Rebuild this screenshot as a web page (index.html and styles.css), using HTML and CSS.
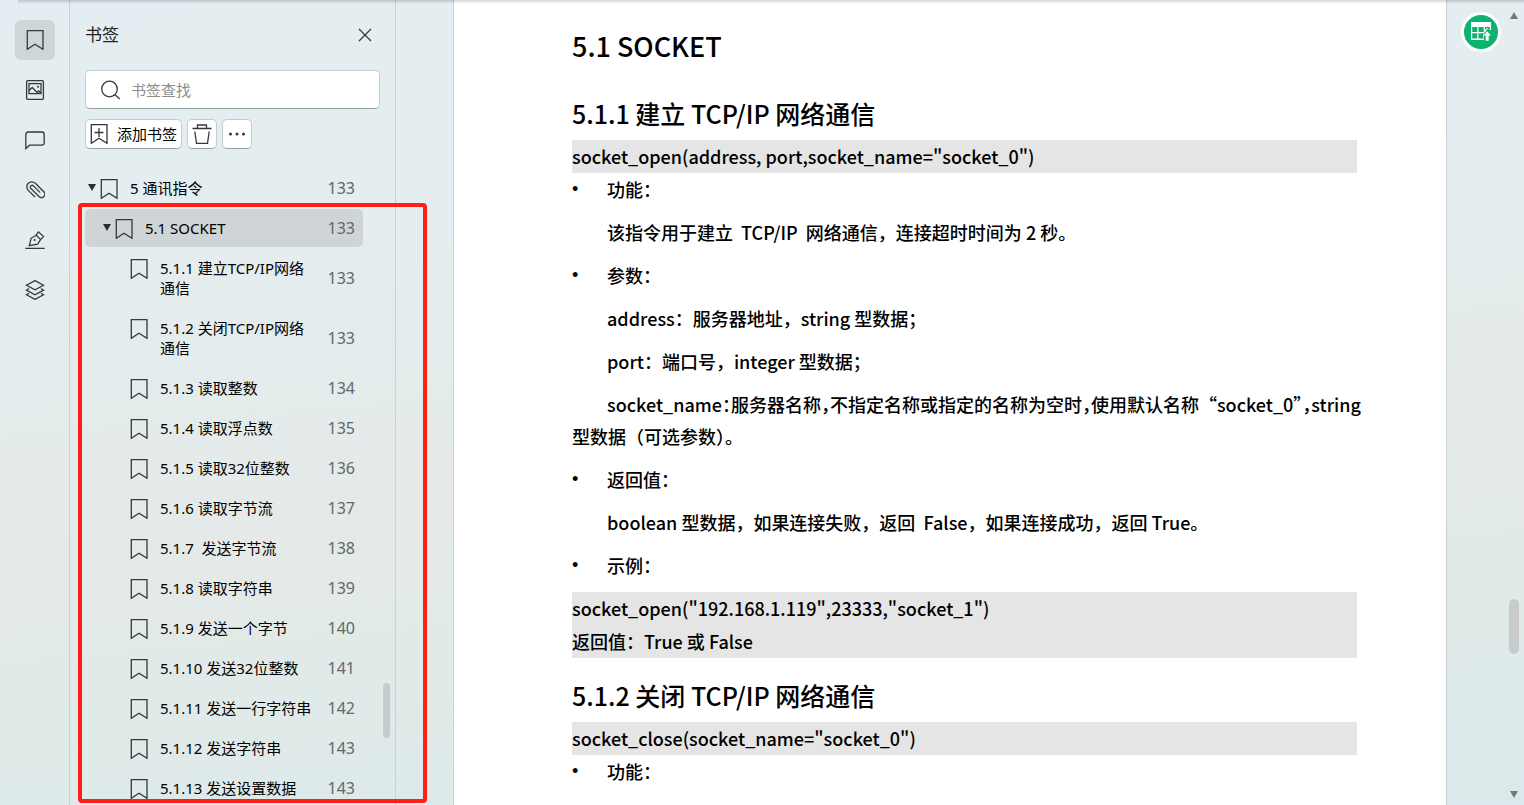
FILE: index.html
```html
<!DOCTYPE html>
<html lang="zh-CN">
<head>
  <meta charset="UTF-8" />
  <meta name="viewport" content="width=device-width, initial-scale=1.0"/>
  <title>书签</title>
  <link rel="stylesheet" href="styles.css">
</head>
<body>

  <!-- SHARED ICONS -->
  <svg class="sprite" aria-hidden="true">
    <symbol id="bookmark" viewBox="0 0 18 20">
      <path d="M1.3.7H17v18.6l-8-5-7.700 5z"/>
    </symbol>
  </svg>

  <div class="app">

    <!-- ICON RAIL -->
    <nav class="rail">
      <button class="rail-btn active" aria-label="书签"><svg class="icon mark" aria-hidden="true"><use href="#bookmark"/></svg></button>
      <button class="rail-btn" aria-label="缩略图">
        <svg class="icon" viewBox="0 0 20 20" aria-hidden="true"><rect x="1.6" y=".7" width="16.8" height="18.6" rx="1"/><rect x="4" y="3.6" width="12" height="10"/><path d="M4 10.5l3.2-3 5 5 1.5-1.5 2.3 2.2"/><circle class="dot" cx="13" cy="6.7" r="1"/></svg>
      </button>
      <button class="rail-btn" aria-label="批注">
        <svg class="icon" viewBox="0 0 20 20" aria-hidden="true"><path d="M.8 18.5V4.4q0-2.4 2.4-2.4h13.6q2.4 0 2.4 2.4v8.4q0 2.4-2.4 2.4H4.6z"/></svg>
      </button>
      <button class="rail-btn" aria-label="附件">
        <svg class="icon" viewBox="0 0 20 20" aria-hidden="true"><path transform="rotate(135 10 10)" d="M15 5v9.500a5 5 0 0 1-10 0V2.500a3.400 3.400 0 0 1 6.800 0v11.500a1.800 1.800 0 0 1-3.600 0V4.500"/></svg>
      </button>
      <button class="rail-btn" aria-label="签名">
        <svg class="icon" viewBox="0 0 20 20" aria-hidden="true"><path d="M.3 18.3h19.4M4.300 15.600l1.800-7.300 5.200-3 4.300 4.300-3 4.500zM11 5.200l2.500-3.300 5 4.700-2.900 3"/><circle class="dot" cx="9.6" cy="10" r="1"/></svg>
      </button>
      <button class="rail-btn" aria-label="图层">
        <svg class="icon" viewBox="0 0 20 20" aria-hidden="true"><path d="M10 .6l8.500 4.600L10 9.800 1.500 5.200zM4 8.500l-2.500 1.600 8.500 4.600 8.500-4.600L16 8.500M4 13.300l-2.500 1.500L10 19.400l8.500-4.600-2.500-1.500"/></svg>
      </button>
    </nav>

    <!-- BOOKMARK PANEL -->
    <aside class="panel">
      <div class="panel-head">
        <h1>书签</h1>
        <button class="close" aria-label="关闭"><svg class="icon small" viewBox="0 0 14 14" aria-hidden="true"><path d="M1 1l12 12M13 1L1 13"/></svg></button>
      </div>

      <label class="search">
        <svg class="icon" viewBox="0 0 20 20" aria-hidden="true"><circle cx="8.5" cy="9" r="7.8"/><path d="M14 14.800l4.700 4.200"/></svg>
        <input type="text" placeholder="书签查找" aria-label="书签查找">
      </label>

      <div class="tools">
        <button class="tool"><svg class="icon mark" viewBox="0 0 18 20" aria-hidden="true"><path d="M1.3.7H17v18.6l-8-5-7.700 5zM9 4v9M4.500 8.500h9"/></svg>添加书签</button>
        <button class="tool" aria-label="删除"><svg class="icon" viewBox="0 0 20 20" aria-hidden="true"><path d="M.5 4.500h19M5.500 4V1h9v3M2.800 7.500l1.700 11.800h11l1.700-11.800"/></svg></button>
        <button class="tool" aria-label="更多"><svg class="icon" viewBox="0 0 20 20" aria-hidden="true"><circle class="dot" cx="3.5" cy="10" r="1.5"/><circle class="dot" cx="10" cy="10" r="1.5"/><circle class="dot" cx="16.5" cy="10" r="1.5"/></svg></button>
      </div>

      <ul class="tree">
        <li><a href="#s5" class="row"><span class="arrow"></span><svg class="icon mark" aria-hidden="true"><use href="#bookmark"/></svg><span class="name">5 通讯指令</span><span class="num">133</span></a>
          <ul>
            <li><a href="#s51" class="row level-1 selected"><span class="arrow"></span><svg class="icon mark" aria-hidden="true"><use href="#bookmark"/></svg><span class="name">5.1 SOCKET</span><span class="num">133</span></a>
              <ul>
                <li><a href="#s511" class="row level-2"><svg class="icon mark" aria-hidden="true"><use href="#bookmark"/></svg><span class="name">5.1.1 建立TCP/IP网络通信</span><span class="num">133</span></a></li>
                <li><a href="#s512" class="row level-2"><svg class="icon mark" aria-hidden="true"><use href="#bookmark"/></svg><span class="name">5.1.2 关闭TCP/IP网络通信</span><span class="num">133</span></a></li>
                <li><a href="#" class="row level-2"><svg class="icon mark" aria-hidden="true"><use href="#bookmark"/></svg><span class="name">5.1.3 读取整数</span><span class="num">134</span></a></li>
                <li><a href="#" class="row level-2"><svg class="icon mark" aria-hidden="true"><use href="#bookmark"/></svg><span class="name">5.1.4 读取浮点数</span><span class="num">135</span></a></li>
                <li><a href="#" class="row level-2"><svg class="icon mark" aria-hidden="true"><use href="#bookmark"/></svg><span class="name">5.1.5 读取32位整数</span><span class="num">136</span></a></li>
                <li><a href="#" class="row level-2"><svg class="icon mark" aria-hidden="true"><use href="#bookmark"/></svg><span class="name">5.1.6 读取字节流</span><span class="num">137</span></a></li>
                <li><a href="#" class="row level-2"><svg class="icon mark" aria-hidden="true"><use href="#bookmark"/></svg><span class="name">5.1.7&nbsp; 发送字节流</span><span class="num">138</span></a></li>
                <li><a href="#" class="row level-2"><svg class="icon mark" aria-hidden="true"><use href="#bookmark"/></svg><span class="name">5.1.8 读取字符串</span><span class="num">139</span></a></li>
                <li><a href="#" class="row level-2"><svg class="icon mark" aria-hidden="true"><use href="#bookmark"/></svg><span class="name">5.1.9 发送一个字节</span><span class="num">140</span></a></li>
                <li><a href="#" class="row level-2"><svg class="icon mark" aria-hidden="true"><use href="#bookmark"/></svg><span class="name">5.1.10 发送32位整数</span><span class="num">141</span></a></li>
                <li><a href="#" class="row level-2"><svg class="icon mark" aria-hidden="true"><use href="#bookmark"/></svg><span class="name">5.1.11 发送一行字符串</span><span class="num">142</span></a></li>
                <li><a href="#" class="row level-2"><svg class="icon mark" aria-hidden="true"><use href="#bookmark"/></svg><span class="name">5.1.12 发送字符串</span><span class="num">143</span></a></li>
                <li><a href="#" class="row level-2"><svg class="icon mark" aria-hidden="true"><use href="#bookmark"/></svg><span class="name">5.1.13 发送设置数据</span><span class="num">143</span></a></li>
              </ul>
            </li>
          </ul>
        </li>
      </ul>
      <div class="panel-thumb"></div>
      <div class="highlight-box"></div>
    </aside>

    <!-- DOCUMENT -->
    <main class="viewer">
      <article class="page">
        <h2 id="s51">5.1 SOCKET</h2>
        <h3 id="s511">5.1.1 建立 TCP/IP 网络通信</h3>
        <pre>socket_open(address, port,socket_name="socket_0")</pre>
        <p class="item">功能：</p>
        <p class="indent">该指令用于建立&nbsp; TCP/IP&nbsp; 网络通信，连接超时时间为 2 秒。</p>
        <p class="item">参数：</p>
        <p class="indent">address：服务器地址，string 型数据；</p>
        <p class="indent">port：端口号，integer 型数据；</p>
        <p class="indent wide">socket_name<span class="half">：</span>服务器名称<span class="half">，</span>不指定名称或指定的名称为空时<span class="half">，</span>使用默认名称“socket_0”<span class="half">，</span>string<br>型数据（可选参数）。</p>
        <p class="item">返回值：</p>
        <p class="indent">boolean 型数据，如果连接失败，返回&nbsp; False，如果连接成功，返回 True。</p>
        <p class="item">示例：</p>
        <pre>socket_open("192.168.1.119",23333,"socket_1")
返回值：True 或 False</pre>
        <h3 id="s512">5.1.2 关闭 TCP/IP 网络通信</h3>
        <pre>socket_close(socket_name="socket_0")</pre>
        <p class="item">功能：</p>
      </article>

      <div class="scrollbar">
        <span class="arrow up"></span>
        <span class="thumb"></span>
        <span class="arrow"></span>
      </div>

      <button class="export" aria-label="导出表格">
        <svg viewBox="0 0 20 20" aria-hidden="true"><path class="sheet" fill-rule="evenodd" d="M0 0h20v8.500l-3-2-5 6v4.500h1V18H0zM1.200 5v5h5.100V5zM7.500 5v5h5.200V5zM1.200 11.200v5.300h5.100v-5.300zM7.500 11.200v5.300h5.200v-5.300zM14 5v3l2-2 2.800 2V5z"/><path class="sheet" d="M16.200 9.200l3.800 4.500h-2.300v5h-3v-5h-2.300z"/></svg>
      </button>
    </main>
  </div>

</body>
</html>
```
FILE: styles.css
```css
:root {
  --line: #c8d0d3;
  --ink: #35393b;
  --ui-font: "Noto Sans", "Noto Sans CJK SC", sans-serif;
  --doc-font: "Noto Sans CJK SC", sans-serif;
}

* {
  box-sizing: border-box;
}

body {
  margin: 0;
  font-family: var(--ui-font);
  font-size: 15px;
  line-height: 20px;
  color: #000;
  background: linear-gradient(175deg, #e4edf1 0%, #e4edf0 25%, #e5eae8 60%, #e0eae8 78%, #dce9ec 100%);
}

h1, h2, h3, p, pre, ul {
  margin: 0;
  padding: 0;
}

ul {
  list-style: none;
}

button {
  font: inherit;
  color: inherit;
  padding: 0;
  border: none;
  background: none;
  cursor: pointer;
}

.sprite {
  position: absolute;
  width: 0;
  height: 0;
}

.app {
  display: flex;
  height: 100vh;
  overflow: hidden;
  position: relative;
}

/* soft shadow under the window toolbar */
.app::after {
  content: "";
  position: absolute;
  top: 0;
  left: 18px;
  right: 0;
  height: 4px;
  background: linear-gradient(rgba(0, 0, 0, 0.16), rgba(0, 0, 0, 0));
}

/* ICONS */
.icon {
  width: 20px;
  height: 20px;
  flex: none;
  fill: none;
  stroke: var(--ink);
  stroke-width: 1.3;
}

.icon.mark {
  width: 18px;
}

.icon.small {
  width: 14px;
  height: 14px;
}

.icon .dot {
  fill: var(--ink);
  stroke: none;
}

.arrow {
  flex: none;
  width: 8px;
  height: 7px;
  background: #2c2f31;
  clip-path: polygon(0 0, 100% 0, 50% 100%);
}

.arrow.up {
  clip-path: polygon(50% 0, 100% 100%, 0 100%);
}

/* ICON RAIL */
.rail {
  flex: none;
  width: 70px;
  padding: 20px 14px 0 15px;
  display: flex;
  flex-direction: column;
  gap: 10px;
  border-right: 1px solid var(--line);
}

.rail-btn {
  width: 40px;
  height: 40px;
  border-radius: 6px;
  display: flex;
  align-items: center;
  justify-content: center;
}

.rail-btn.active {
  background: #cfd6d9;
}

/* BOOKMARK PANEL */
.panel {
  flex: none;
  width: 326px;
  padding: 20px 15px 0;
  position: relative;
  border-right: 1px solid #cdd3d5;
}

.panel-head {
  display: flex;
  align-items: center;
  justify-content: space-between;
  height: 30px;
  padding-right: 8px;
  margin-bottom: 20px;
}

.panel-head h1 {
  font-size: 17px;
  font-weight: 400;
  color: #222;
}

.close {
  display: flex;
}

.search {
  display: flex;
  align-items: center;
  gap: 10px;
  height: 39px;
  padding: 0 15px;
  background: #fff;
  border: 1px solid #c3cdd0;
  border-bottom-color: #94a0a4;
  border-radius: 5px;
}

.search input {
  flex: 1;
  min-width: 0;
  padding: 0;
  border: none;
  outline: none;
  background: none;
  font: inherit;
}

.search input::placeholder {
  color: #8c8c8c;
}

.tools {
  display: flex;
  gap: 5px;
  margin-top: 10px;
}

.tool {
  display: flex;
  align-items: center;
  gap: 9px;
  height: 30px;
  padding: 0 4px;
  background: #fff;
  border: 1px solid #c3cdd0;
  border-bottom-color: #94a0a4;
  border-radius: 5px;
}

.tree {
  margin-top: 20px;
}

.row {
  display: flex;
  align-items: flex-start;
  margin: 0 17px 2px 0;
  padding: 9px 8px 9px 3px;
  border-radius: 5px;
  color: inherit;
  text-decoration: none;
}

.row.level-1 {
  padding-left: 18px;
}

.row.level-2 {
  padding-left: 45px;
}

.row.selected {
  background: #cfd4d6;
}

.row .arrow {
  margin: 6px 4px 0 0;
}

.row .icon {
  margin: 1px 12px -1px 0;
}

.name {
  flex: 1;
  padding-right: 12px;
}

.num {
  align-self: center;
  font-size: 16px;
  color: #62676a;
}

.panel-thumb {
  position: absolute;
  right: 5px;
  top: 683px;
  width: 7px;
  height: 55px;
  border-radius: 4px;
  background: #c6cccd;
}

/* red frame drawn over the listed section */
.highlight-box {
  position: absolute;
  top: 203px;
  bottom: 2px;
  left: 8px;
  right: -32px;
  border: 4px solid #ff2013;
  border-radius: 4px;
  z-index: 2;
}

/* DOCUMENT */
.viewer {
  flex: 1;
  min-width: 0;
  display: flex;
  justify-content: space-between;
  position: relative;
  padding-left: 57px;
}

.page {
  flex: 1;
  min-width: 0;
  padding: 28px 89px 0 118px;
  background: #fff;
  border-left: 1px solid var(--line);
  border-right: 1px solid var(--line);
  font-family: var(--doc-font);
  font-size: 18px;
  font-weight: 500;
  line-height: 32px;
}

.page h2,
.page h3 {
  font-weight: 500;
  line-height: 36px;
}

.page h2 {
  font-size: 27px;
  margin-bottom: 31px;
}

.page h3 {
  font-size: 25px;
  margin: 19px 0 9px;
}

.page pre {
  font: inherit;
  line-height: 33px;
  background: #e5e5e5;
}

.page p {
  margin-bottom: 11px;
}

.item {
  display: flex;
}

.item::before {
  content: "•";
  width: 35px;
  font-family: "Liberation Sans", sans-serif;
}

.indent {
  text-indent: 35px;
}

.wide {
  white-space: nowrap;
}

.half {
  font-feature-settings: "halt";
}

.scrollbar {
  flex: none;
  width: 77px;
  padding: 12px 5px 7px;
  display: flex;
  flex-direction: column;
  align-items: flex-end;
  justify-content: space-between;
}

.scrollbar .arrow {
  background: #777;
  margin-right: 1px;
}

.thumb {
  width: 10px;
  height: 55px;
  margin-top: 442px;
  border-radius: 5px;
  background: #c8cccc;
}

.export {
  position: absolute;
  top: 12px;
  right: 23px;
  width: 40px;
  height: 40px;
  display: flex;
  align-items: center;
  justify-content: center;
  background: #0cb26e;
  border: 3px solid #fff;
  border-radius: 50%;
}

.export svg {
  width: 20px;
  height: 20px;
}

.sheet {
  fill: #fff;
}
```
